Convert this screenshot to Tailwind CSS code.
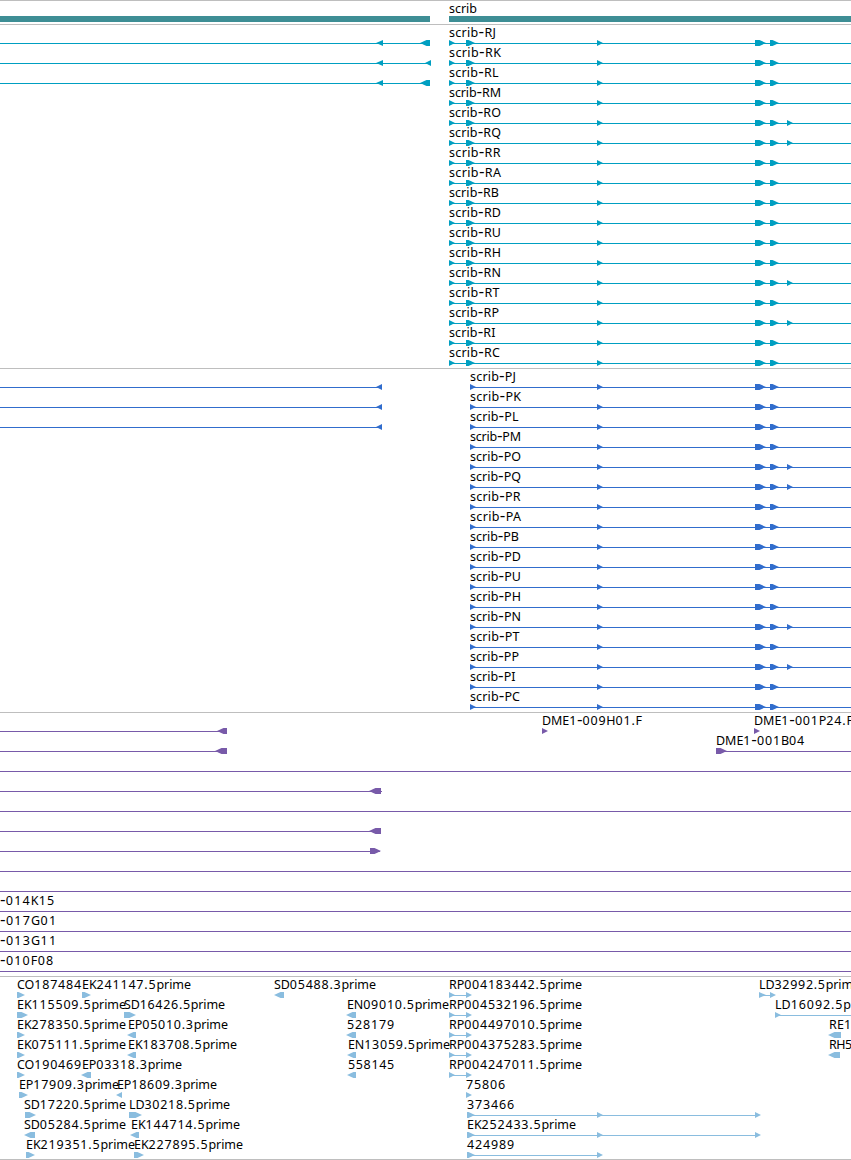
<!DOCTYPE html>
<html lang="en">
<head>
<meta charset="UTF-8" />
<meta name="viewport" content="width=device-width, initial-scale=1.0" />
<title>scrib - Genome Browser</title>
<script src="https://cdn.jsdelivr.net/npm/@tailwindcss/browser@4"></script>
</head>

<body class="bg-white w-[851px] overflow-hidden font-['Noto_Sans',sans-serif] text-[12.5px] text-black">
<main class="flex flex-col">
  <!-- gene span -->
  <section class="border-t border-[#bebebe] h-6">
    <svg class="block w-full h-[23px]">
      <text x="449" y="12" textLength="28" fill="currentColor">scrib</text>
      <g fill="#3e8e95">
        <rect x="0" y="15" width="430" height="6" />
        <rect x="449" y="15" width="402" height="6" />
      </g>
    </svg>
  </section>
  <section id="transcripts" class="border-t border-[#bebebe] pt-px pb-0.5 text-[#009fc1]"></section>
  <section id="cds" class="border-t border-[#bebebe] pt-px pb-0.5 text-[#316dcd]"></section>
  <section id="bacs" class="border-t border-[#bebebe] pt-px pb-0.5 text-[#785aa9]"></section>
  <section id="ests" class="border-y border-[#bebebe] pt-px pb-px text-[#8abddf]"></section>
</main>

<script>
// row = { t: labels [x, end, text], l: lines [x1, x2], r / f: arrows [x1, x2] pointing right / left }
function arrow(x1, x2, left) {
  const h = x2 - x1 < 8 ? x2 - x1 : 6.5;
  return left
    ? `<polygon points="${x2},14 ${x1 + h},14 ${x1},17 ${x1 + h},20 ${x2},20"/>`
    : `<polygon points="${x1},14 ${x2 - h},14 ${x2},17 ${x2 - h},20 ${x1},20"/>`;
}

// digits sit a little wider apart than letters, dashes are long
function label(s) {
  return s.replace(/-|[\d.]+/g, m => m == '-'
    ? `<tspan class="font-['DejaVu_Sans'] text-[15.5px]">-</tspan>`
    : `<tspan class="tracking-[0.85px]">${m}</tspan>`);
}

function draw(id, rows) {
  document.getElementById(id).innerHTML = rows.map(row => `<svg class="block w-full h-5 overflow-visible" fill="currentColor">
    ${(row.l || []).map(([a, b]) => `<rect x="${a}" y="17" width="${b - a}" height="1"/>`).join('')}
    ${(row.r || []).map(([a, b]) => arrow(a, b, false)).join('')}
    ${(row.f || []).map(([a, b]) => arrow(a, b, true)).join('')}
    ${(row.t || []).map(([a, b, s]) => `<text x="${a}" y="11" textLength="${b - a}" class="fill-black">${label(s)}</text>`).join('')}
  </svg>`).join('');
}

const isoforms = ['J','K','L','M','O','Q','R','A','B','D','U','H','N','T','P','I','C'];
const ends = { J: 47, K: 52, L: 49.5, M: 52, O: 52, Q: 52, R: 51.5, A: 52, B: 50, D: 52, U: 52, H: 52, N: 52, T: 50.5, P: 50, I: 46.5, C: 51 };
const extra = ['O', 'Q', 'N', 'P'];

draw('transcripts', isoforms.map((c, i) => ({
  t: [[449, 449 + ends[c], 'scrib-R' + c]],
  l: [[449, 851]].concat(i < 3 ? [[0, 430]] : []),
  r: [[449, 455], [466, 475], [597, 603], [755, 766], [770, 779]].concat(extra.includes(c) ? [[787, 793]] : []),
  f: i < 3 ? [[376, 383], i == 1 ? [425, 431] : [420, 430]] : []
})));

draw('cds', isoforms.map((c, i) => ({
  t: [[470, 469 + ends[c], 'scrib-P' + c]],
  l: [[470, 851]].concat(i < 3 ? [[0, 382]] : []),
  r: [[470, 476], [597, 603], [755, 766], [770, 779]].concat(extra.includes(c) ? [[787, 793]] : []),
  f: i < 3 ? [[376, 382]] : []
})));

draw('bacs', [
  { l: [[0, 227]], f: [[217, 227]], r: [[542, 548], [754, 760]], t: [[542, 642, 'DME1-009H01.F'], [754, 853, 'DME1-001P24.F']] },
  { l: [[0, 227], [716, 851]], f: [[215, 227]], r: [[716, 727]], t: [[716, 805, 'DME1-001B04']] },
  { l: [[0, 851]] },
  { l: [[0, 382]], f: [[369, 381]] },
  { l: [[0, 851]] },
  { l: [[0, 381]], f: [[369, 381]] },
  { l: [[0, 380]], r: [[370, 381]] },
  { l: [[0, 851]] },
  { l: [[0, 851]] },
  { l: [[0, 851]], t: [[0, 55, '-014K15']] },
  { l: [[0, 851]], t: [[0, 57, '-017G01']] },
  { l: [[0, 851]], t: [[0, 57, '-013G11']] },
  { l: [[0, 851]], t: [[0, 54, '-010F08']] }
]);

draw('ests', [
  { t: [[17, 82, 'CO187484'], [82, 191, 'EK241147.5prime'], [274, 376, 'SD05488.3prime'], [449, 582, 'RP004183442.5prime'], [759, 860, 'LD32992.5prime']],
    l: [[449, 470], [759, 774]], r: [[17, 25], [82, 91], [449, 455], [466, 472], [759, 766], [770, 776]], f: [[274, 284]] },
  { t: [[17, 126, 'EK115509.5prime'], [124, 225, 'SD16426.5prime'], [347, 449, 'EN09010.5prime'], [449, 582, 'RP004532196.5prime'], [775, 851, 'LD16092.5p']],
    l: [[449, 470], [775, 851]], r: [[17, 28], [124, 136], [449, 455], [466, 472], [775, 781]], f: [[346, 356]] },
  { t: [[17, 126, 'EK278350.5prime'], [128, 228, 'EP05010.3prime'], [347, 395, '528179'], [449, 582, 'RP004497010.5prime'], [829, 852, 'RE1']],
    l: [[449, 470]], r: [[17, 25], [449, 455], [466, 472]], f: [[127, 136], [346, 356], [828, 841]] },
  { t: [[17, 126, 'EK075111.5prime'], [128, 237, 'EK183708.5prime'], [348, 450, 'EN13059.5prime'], [449, 582, 'RP004375283.5prime'], [829, 853, 'RH5']],
    l: [[449, 470]], r: [[17, 25], [449, 455], [466, 472]], f: [[127, 136], [347, 356], [828, 840]] },
  { t: [[17, 82, 'CO190469'], [82, 182, 'EP03318.3prime'], [348, 395, '558145'], [449, 582, 'RP004247011.5prime']],
    l: [[449, 470]], r: [[17, 25], [449, 455], [466, 472]], f: [[81, 91], [347, 356]] },
  { t: [[19, 119, 'EP17909.3prime'], [117, 217, 'EP18609.3prime'], [466, 506, '75806']],
    r: [[19, 28], [466, 472]], f: [[116, 122]] },
  { t: [[24, 126, 'SD17220.5prime'], [129, 230, 'LD30218.5prime'], [467, 515, '373466']],
    l: [[467, 758]], r: [[25, 36], [129, 142], [467, 475], [597, 603], [755, 761]] },
  { t: [[24, 126, 'SD05284.5prime'], [131, 240, 'EK144714.5prime'], [467, 576, 'EK252433.5prime']],
    l: [[467, 758]], r: [[467, 475], [597, 603], [755, 761]], f: [[24, 35], [130, 139]] },
  { t: [[26, 135, 'EK219351.5prime'], [134, 243, 'EK227895.5prime'], [467, 515, '424989']],
    l: [[467, 600]], r: [[26, 35], [134, 144], [467, 475], [597, 603]] }
]);
</script>
</body>
</html>
